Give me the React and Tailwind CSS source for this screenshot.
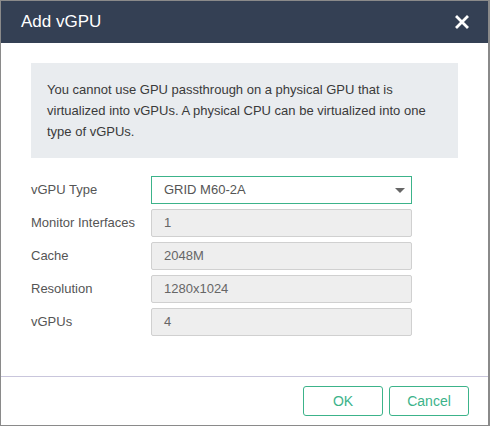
const FIELDS = [
  { label: 'Monitor Interfaces', value: '1' },
  { label: 'Cache', value: '2048M' },
  { label: 'Resolution', value: '1280x1024' },
  { label: 'vGPUs', value: '4' },
]

export default function App() {
  return (
    <div className="w-[490px] h-[426px] bg-[#1f2430] font-['Liberation_Sans',Arial,sans-serif]">
      <div className="w-[490px] h-[426px] border border-r-2 border-[#8a8a8a] bg-white flex flex-col">
        {/* header */}
        <div className="h-[42px] bg-[#344054] flex items-center justify-between pl-[20px] pr-[19px] shrink-0">
          <span className="text-white text-[17px]">Add vGPU</span>
          <svg width="14" height="14" viewBox="0 0 14 14">
            <path d="M2 2 L12 12 M12 2 L2 12" stroke="white" strokeWidth="2.8" strokeLinecap="square" />
          </svg>
        </div>

        {/* body */}
        <div className="flex-1 pt-[20px] px-[30px]">
          <div className="bg-[#e9ecef] h-[95px] pl-[16px] pr-[12px] pt-[16px] text-[13px] leading-[21px] text-[#3a3a3a]">
            You cannot use GPU passthrough on a physical GPU that is virtualized into vGPUs. A physical CPU can be virtualized into one type of vGPUs.
          </div>

          <div className="mt-[18px] flex flex-col gap-[5px]">
            <div className="flex items-center">
              <span className="w-[120px] text-[13px] text-[#555]">vGPU Type</span>
              <div className="w-[261px] h-[28px] border border-[#3cb38a] bg-white flex items-center justify-between pl-[12px] pr-[6px] text-[13px] text-[#555]">
                <span>GRID M60-2A</span>
                <svg width="10" height="5" viewBox="0 0 10 5">
                  <path d="M0 0 H10 L5 5 Z" fill="#666" />
                </svg>
              </div>
            </div>
            {FIELDS.map(f => (
              <div key={f.label} className="flex items-center">
                <span className="w-[120px] text-[13px] text-[#555]">{f.label}</span>
                <div className="w-[261px] h-[28px] border border-[#d0d0d0] rounded-[2px] bg-[#eeeeee] flex items-center pl-[12px] text-[13px] text-[#666]">
                  {f.value}
                </div>
              </div>
            ))}
          </div>
        </div>

        {/* footer */}
        <div className="h-[49px] border-t border-[#c9c6dc] flex items-start justify-end gap-[6px] pt-[9px] pr-[19px] shrink-0">
          <button className="w-[80px] h-[30px] border border-[#3cb38a] rounded-[3px] text-[#3cb38a] text-[14px] bg-white">OK</button>
          <button className="w-[80px] h-[30px] border border-[#3cb38a] rounded-[3px] text-[#3cb38a] text-[14px] bg-white">Cancel</button>
        </div>
      </div>
    </div>
  )
}
